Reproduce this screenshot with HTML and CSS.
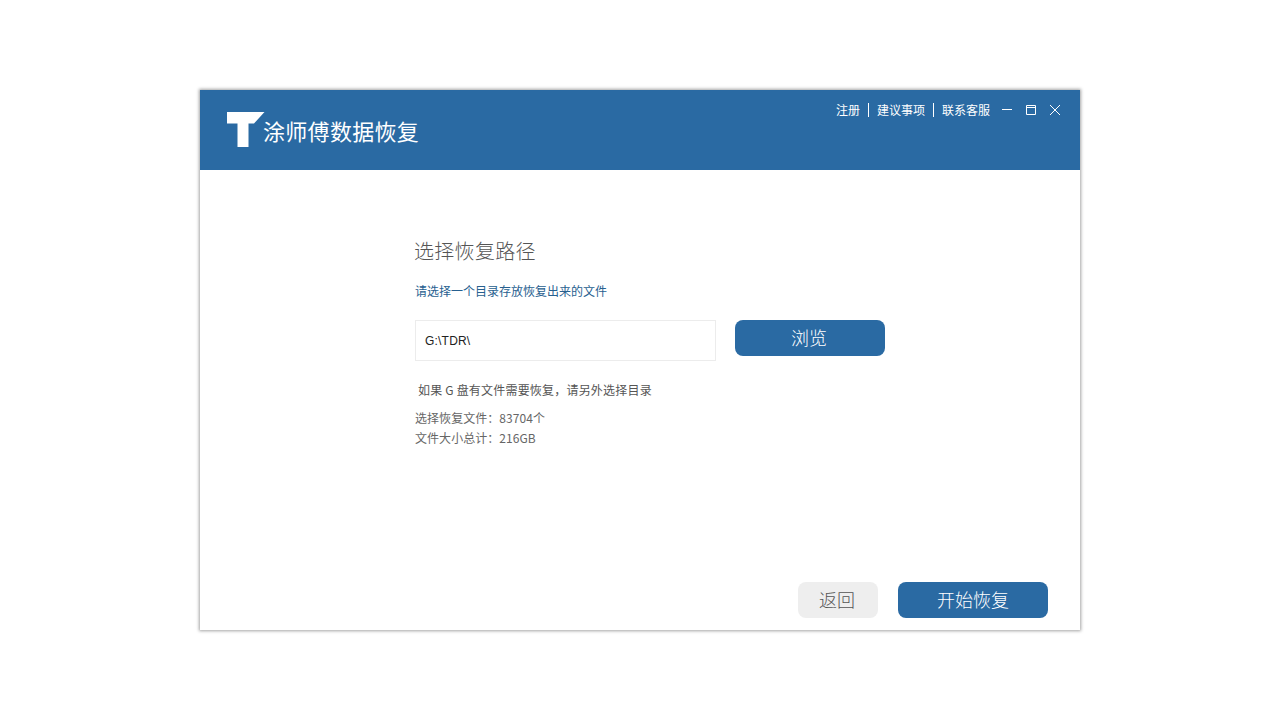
FILE: index.html
```html
<!DOCTYPE html>
<html lang="zh-CN">
<head>
<meta charset="utf-8">
<title>涂师傅数据恢复</title>
<link rel="stylesheet" href="styles.css">
</head>
<body>
<main class="window">
  <header class="header">
    <div class="brand">
      <svg class="logo" width="38" height="36" viewBox="0 0 38 36"><path d="M0 0H37.500L27 11.500H21.500V35H10.500V11.500H0Z" fill="#fff"/></svg>
      <span class="brand-name">涂师傅数据恢复</span>
    </div>
    <nav class="topbar">
      <a class="link">注册</a><i class="sep"></i><a class="link">建议事项</a><i class="sep"></i><a class="link">联系客服</a>
      <div class="controls">
        <svg width="10" height="10" viewBox="0 0 10 10"><path d="M0 4.500H10" stroke="#fff" fill="none"/></svg>
        <svg width="13" height="10" viewBox="0 0 13 10"><path d="M2.500 .5H11.500V9.500H2.500ZM2.500 2.500H11.500" stroke="#fff" fill="none"/></svg>
        <svg width="12" height="12" viewBox="0 0 12 12"><path d="M1 1L11 11M11 1L1 11" stroke="#fff" fill="none"/></svg>
      </div>
    </nav>
  </header>
  <section class="body">
    <h1 class="title">选择恢复路径</h1>
    <p class="hint">请选择一个目录存放恢复出来的文件</p>
    <div class="path-row">
      <div class="path-input">G:\TDR\</div>
      <button class="btn btn-primary btn-browse">浏览</button>
    </div>
    <p class="note">如果 G 盘有文件需要恢复，请另外选择目录</p>
    <p class="stat">选择恢复文件：83704个</p>
    <p class="stat">文件大小总计：216GB</p>
  </section>
  <footer class="footer">
    <button class="btn btn-back">返回</button>
    <button class="btn btn-primary btn-start">开始恢复</button>
  </footer>
</main>
</body>
</html>
```
FILE: styles.css
```css
* { box-sizing: border-box; }
html, body { margin: 0; height: 100%; }
body {
  display: flex;
  align-items: center;
  justify-content: center;
  background: #fff;
  font-family: "Noto Sans CJK SC", "Liberation Sans", sans-serif;
}
.window {
  width: 880px;
  height: 540px;
  display: flex;
  flex-direction: column;
  background: #fff;
  box-shadow: 0 0 3px 1px #a4a4a4;
}
.header {
  height: 80px;
  flex: none;
  display: flex;
  justify-content: space-between;
  background: #2a6aa3;
  color: #fff;
}
.brand {
  display: flex;
  align-items: flex-start;
  padding: 22px 0 0 27px;
}
.logo { display: block; }
.brand-name {
  margin-top: 3px;
  margin-left: -2px;
  font-size: 22px;
  line-height: 30px;
  letter-spacing: 0.3px;
  font-weight: 400;
}
.topbar {
  display: flex;
  align-items: center;
  height: 20px;
  margin-top: 10px;
  padding-right: 19px;
  font-size: 12px;
}
.link { line-height: 20px; margin-top: -1px; font-weight: 400; }
.sep {
  width: 1px;
  height: 14px;
  margin: 0 8px;
  background: #fff;
}
.controls {
  display: flex;
  align-items: center;
  gap: 12px;
  margin-left: 12px;
}
.controls svg { display: block; }
.body {
  flex: 1;
  padding: 67px 0 0 214px;
}
.title {
  margin: 0;
  font-size: 20px;
  line-height: 28px;
  letter-spacing: 0.3px;
  font-weight: 300;
  color: #555;
}
.hint {
  margin: 17px 0 0 1px;
  font-size: 12px;
  line-height: 18px;
  color: #27608f;
}
.path-row {
  display: flex;
  align-items: flex-start;
  margin: 20px 0 0 1px;
}
.path-input {
  width: 301px;
  height: 41px;
  padding-left: 9px;
  border: 1px solid #ececec;
  font-family: "Liberation Sans", sans-serif;
  font-size: 12px;
  letter-spacing: 0.2px;
  line-height: 40px;
  color: #222;
}
.btn {
  border: 0;
  padding: 0 0 2px;
  border-radius: 8px;
  font-family: inherit;
  font-size: 18px;
  font-weight: 300;
}
.btn-primary { background: #2a6aa3; color: #fff; }
.btn-browse { width: 150px; height: 36px; margin-left: 19px; padding-right: 2px; }
.note {
  margin: 20px 0 0 4px;
  font-size: 12px;
  line-height: 18px;
  letter-spacing: 0.2px;
  color: #555;
}
.stat {
  margin: 0 0 0 1px;
  font-size: 12px;
  line-height: 20px;
  letter-spacing: 0.05px;
  color: #666;
}
.note + .stat { margin-top: 9px; }
.footer {
  flex: none;
  display: flex;
  justify-content: flex-end;
  gap: 20px;
  padding: 0 32px 12px 0;
}
.btn-back { width: 80px; height: 36px; padding-right: 2px; background: #eeeeee; color: #555; }
.btn-start { width: 150px; height: 36px; }
```
